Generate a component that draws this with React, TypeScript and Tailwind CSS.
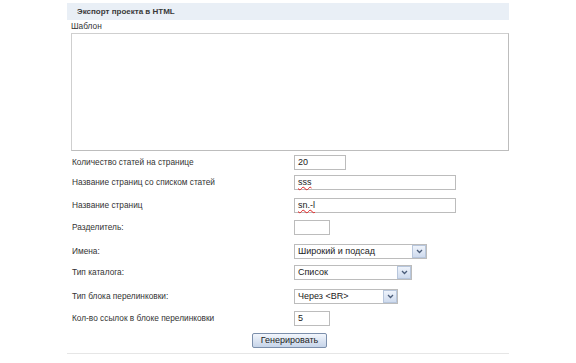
import React from "react";

const font = { fontFamily: '"Liberation Sans", Arial, sans-serif' };

function Chevron() {
  return (
    <div className="w-[14px] h-[13px] bg-gradient-to-b from-[#eef3fb] to-[#cfdbee] border border-[#b7c6dc] flex items-center justify-center">
      <svg width="7" height="5" viewBox="0 0 7 5">
        <path d="M1 1 L3.5 3.5 L6 1" stroke="#4b5d7a" strokeWidth="1.3" fill="none" />
      </svg>
    </div>
  );
}

function Input({ w, value, spell }: { w: string; value?: string; spell?: boolean }) {
  return (
    <div className={`${w} h-[15px] border border-[#bcbcbc] bg-white flex items-center pl-[3px] text-[9px] text-[#222]`}>
      {value ? (
        <span className={spell ? "underline decoration-wavy decoration-[#e02020] decoration-1 underline-offset-1" : ""}>{value}</span>
      ) : null}
    </div>
  );
}

function Select({ w, value }: { w: string; value: string }) {
  return (
    <div className={`${w} h-[15px] border border-[#bcbcbc] bg-white flex items-center justify-between pl-[3px] pr-0 text-[9px] text-[#222]`}>
      <span>{value}</span>
      <Chevron />
    </div>
  );
}

function Row({ mt, label, children }: { mt: string; label: string; children: React.ReactNode }) {
  return (
    <div className={`${mt} flex items-center h-[15px]`}>
      <div className="w-[223px] text-[8.3px] text-[#333] whitespace-nowrap pl-[1px]">{label}</div>
      {children}
    </div>
  );
}

export default function App() {
  return (
    <div className="w-[576px] h-[363px] bg-white overflow-hidden" style={font}>
      <div className="ml-[67px] pt-[3px] w-[442px]">
        <div className="h-[17px] bg-[#e9eff6] flex items-center pl-[10px] text-[8px] font-bold text-[#3a3a3a]">
          Экспорт проекта в HTML
        </div>
        <div className="pl-[4px]">
          <div className="mt-[1px] h-[11px] text-[8.3px] text-[#333] leading-[11px]">Шаблон</div>
          <div className="mt-[1px] h-[118px] w-[438px] border border-[#cfcfcf] border-b-[#bdbdbd] border-r-[#bdbdbd] bg-white" />
          <Row mt="mt-[4px]" label="Количество статей на странице">
            <Input w="w-[52px]" value="20" />
          </Row>
          <Row mt="mt-[5px]" label="Название страниц со списком статей">
            <Input w="w-[162px]" value="sss" spell />
          </Row>
          <Row mt="mt-[8px]" label="Название страниц">
            <Input w="w-[162px]" value="sn.-l" spell />
          </Row>
          <Row mt="mt-[7px]" label="Разделитель:">
            <Input w="w-[36px]" />
          </Row>
          <Row mt="mt-[9px]" label="Имена:">
            <Select w="w-[133px]" value="Широкий и подсад" />
          </Row>
          <Row mt="mt-[6px]" label="Тип каталога:">
            <Select w="w-[118px]" value="Список" />
          </Row>
          <Row mt="mt-[9px]" label="Тип блока перелинковки:">
            <Select w="w-[104px]" value="Через <BR>" />
          </Row>
          <Row mt="mt-[7px]" label="Кол-во ссылок в блоке перелинковки">
            <Input w="w-[36px]" value="5" />
          </Row>
          <div className="mt-[7px] flex pl-[181px]">
            <button className="w-[75px] h-[15px] border border-[#7c8fab] rounded-[2px] bg-gradient-to-b from-[#f2f6fc] to-[#c6d4e9] text-[9px] text-[#222] leading-none flex items-center justify-center">
              Генерировать
            </button>
          </div>
        </div>
        <div className="mt-[5px] h-px bg-[#e6e6e6]" />
      </div>
    </div>
  );
}
